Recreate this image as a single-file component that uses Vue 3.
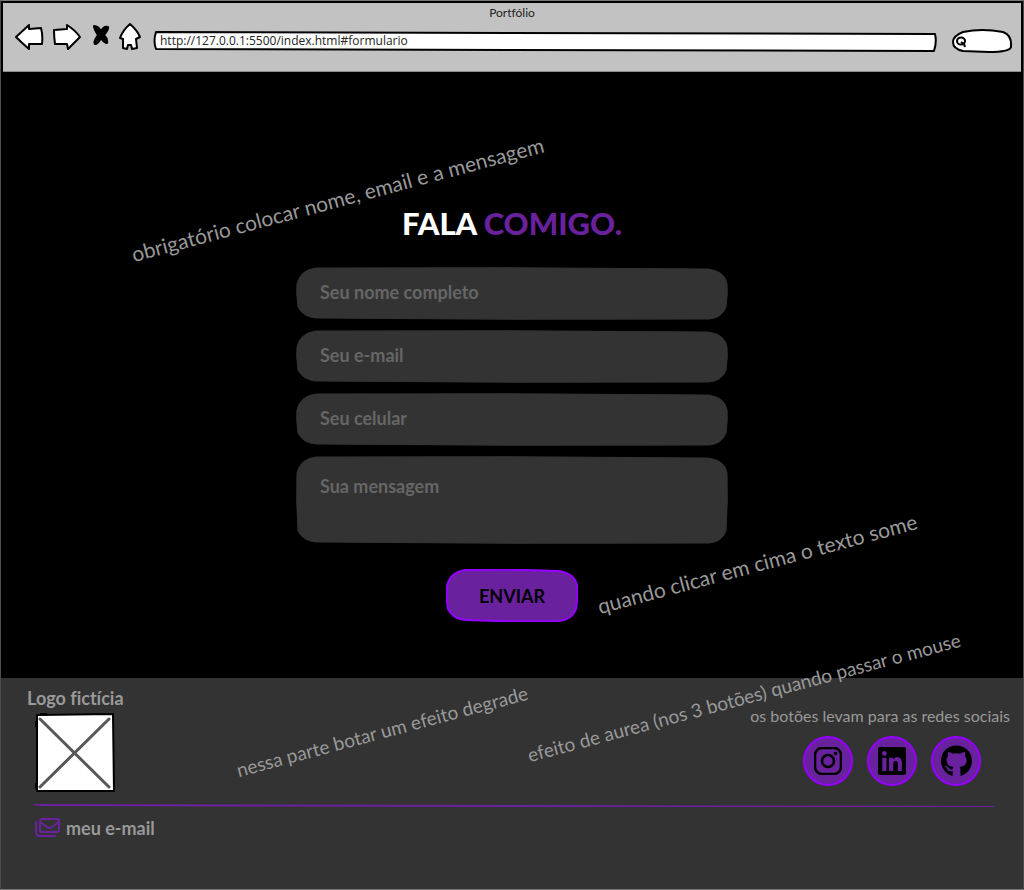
<script setup>
import { ref } from 'vue'

const url = ref('http://127.0.0.1:5500/index.html#formulario')
const search = ref('')

const fields = [
  { id: 'nome', type: 'text', label: 'Seu nome completo', height: 53 },
  { id: 'email', type: 'email', label: 'Seu e-mail', height: 53 },
  { id: 'celular', type: 'tel', label: 'Seu celular', height: 53 },
  { id: 'mensagem', type: 'area', label: 'Sua mensagem', height: 88 }
]
const form = ref({ nome: '', email: '', celular: '', mensagem: '' })

// Hand-drawn rounded box outline for a given size
function sketch(w, h) {
  return `M20 1 Q${w / 2} 0 ${w - 20} 2 Q${w - 3} 4 ${w - 1} 17 Q${w} ${h / 2} ${w - 2} ${h - 13}` +
    ` Q${w - 6} ${h - 2} ${w - 19} ${h - 1} Q${w / 2} ${h} 20 ${h - 2} Q7 ${h - 3} 2 ${h - 13}` +
    ` Q0 ${h / 2} 1 17 Q4 3 20 1 Z`
}
</script>

<template>
  <div class="window">
    <header class="chrome">
      <div class="title">Portfólio</div>
      <div class="toolbar">
        <button class="tool" type="button" aria-label="Voltar">
          <svg width="30" height="28" viewBox="0 0 30 28"><path d="M2 14 L15 2 L15 6 L27 5 Q29 12 28 21 L15 21 L15 26 Q8 20 2 14Z" /></svg>
        </button>
        <button class="tool forward" type="button" aria-label="Avançar">
          <svg width="30" height="28" viewBox="0 0 30 28"><path d="M2 7 L15 6 L15 2 Q23 7 28 14 L16 26 L15 21 L3 21 Q2 14 2 7Z" /></svg>
        </button>
        <button class="tool stop" type="button" aria-label="Parar">
          <svg width="18" height="26" viewBox="0 0 18 26"><path class="solid" d="M2 2 Q7 2 9 8 Q11 2 16 3 Q17 5 12 11 Q16 15 15 19 Q12 19 9 14 Q6 20 3 20 Q1 18 6 11 Q2 5 2 2Z" /></svg>
        </button>
        <button class="tool home" type="button" aria-label="Início">
          <svg width="24" height="30" viewBox="0 0 24 30"><path d="M12 2 Q19 8 22 15 L18 17 L19 26 L14 27 L13 23 L10 23 L9 27 L5 26 L5 17 L2 16 Q5 8 12 2Z" /></svg>
        </button>
        <div class="address">
          <svg class="outline" viewBox="0 0 784 22" preserveAspectRatio="none"><path d="M3 2 L782 4 Q784 12 781 21 L3 19 Q0 11 3 2Z" /></svg>
          <input v-model="url" type="text" aria-label="Endereço" />
        </div>
        <div class="search">
          <svg class="outline" viewBox="0 0 62 26" preserveAspectRatio="none"><path d="M12 4 Q31 0 52 4 Q61 7 60 19 Q59 24 38 24 L12 23 Q2 21 2 14 Q2 8 12 4Z" /></svg>
          <svg class="lens" width="14" height="14" viewBox="0 0 14 14"><ellipse cx="6" cy="6" rx="4" ry="3.6" /><path d="M6 7 L9 9 L10 12" /></svg>
          <input v-model="search" type="text" aria-label="Pesquisar" />
        </div>
      </div>
    </header>

    <main class="content">
      <h1>FALA <span>COMIGO.</span></h1>
      <form @submit.prevent>
        <div v-for="f in fields" :key="f.id" class="field" :class="{ tall: f.type === 'area' }">
          <svg class="shape" :viewBox="`0 0 432 ${f.height}`" preserveAspectRatio="none"><path :d="sketch(432, f.height)" /></svg>
          <textarea v-if="f.type === 'area'" v-model="form[f.id]" :placeholder="f.label" :aria-label="f.label"></textarea>
          <input v-else v-model="form[f.id]" :type="f.type" :placeholder="f.label" :aria-label="f.label" />
        </div>
        <button class="send" type="submit">
          <svg class="shape" viewBox="0 0 132 53" preserveAspectRatio="none"><path :d="sketch(132, 53)" /></svg>
          <span>ENVIAR</span>
        </button>
      </form>
      <p class="note required">obrigatório colocar nome, email e a mensagem</p>
      <p class="note click">quando clicar em cima o texto some</p>
    </main>

    <footer class="footer">
      <div class="top">
        <div class="brand">
          <strong>Logo fictícia</strong>
          <svg width="80" height="80" viewBox="0 0 80 80" role="img" aria-label="Logo fictícia">
            <path d="M2 2 L78 1 L79 78 L2 78Z" fill="#fff" stroke="#000" stroke-width="2" />
            <path d="M5 1 H12 M1 8 V14 M1 70 V76" fill="none" stroke="#000" stroke-width="3" />
            <path d="M5 6 L74 74 M74 6 L5 74" fill="none" stroke="#58585a" stroke-width="3" stroke-linecap="round" />
          </svg>
        </div>
        <div class="social">
          <p>os botões levam para as redes sociais</p>
          <nav>
            <a href="#instagram" aria-label="Instagram">
              <svg width="28" height="28" viewBox="0 0 28 28"><rect x="1" y="1" width="26" height="26" rx="7" fill="none" stroke="#000" stroke-width="2.6" /><circle cx="14" cy="14" r="6" fill="none" stroke="#000" stroke-width="2.6" /><circle cx="21.5" cy="6.5" r="1.8" /></svg>
            </a>
            <a href="#linkedin" aria-label="LinkedIn">
              <svg width="28" height="28" viewBox="0 32 448 448"><path d="M416 32H31.9C14.3 32 0 46.5 0 64.3v383.4C0 465.5 14.3 480 31.9 480H416c17.6 0 32-14.5 32-32.3V64.3c0-17.8-14.4-32.3-32-32.3zM135.4 416H69V202.2h66.5V416zm-33.2-243c-21.3 0-38.5-17.3-38.5-38.5S80.9 96 102.2 96c21.2 0 38.5 17.3 38.5 38.5 0 21.3-17.2 38.5-38.5 38.5zm282.1 243h-66.4V312c0-24.8-.5-56.7-34.5-56.7-34.6 0-39.9 27-39.9 54.9V416h-66.4V202.2h63.7v29.2h.9c8.9-16.8 30.6-34.5 62.2-34.5 66.5 0 78.9 43.8 78.9 100.9V416z" /></svg>
            </a>
            <a href="#github" aria-label="GitHub">
              <svg width="31" height="32" viewBox="0 0 496 512"><path d="M165.9 397.4c0 2-2.3 3.6-5.2 3.6-3.3.3-5.6-1.3-5.6-3.6 0-2 2.3-3.6 5.2-3.6 3-.3 5.6 1.3 5.6 3.6zm-31.1-4.5c-.7 2 1.3 4.3 4.3 4.9 2.6 1 5.6 0 6.2-2s-1.3-4.3-4.3-5.2c-2.6-.7-5.5.3-6.2 2.3zm44.2-1.7c-2.9.7-4.9 2.6-4.6 4.9.3 2 2.9 3.3 5.9 2.6 2.9-.7 4.9-2.6 4.6-4.6-.3-1.9-3-3.2-5.9-2.9zM244.8 8C106.1 8 0 113.3 0 252c0 110.9 69.8 205.8 169.5 239.2 12.8 2.3 17.3-5.6 17.3-12.1 0-6.2-.3-40.4-.3-61.4 0 0-70 15-84.7-29.8 0 0-11.4-29.1-27.8-36.6 0 0-22.9-15.7 1.6-15.4 0 0 24.9 2 38.6 25.8 21.9 38.6 58.6 27.5 72.9 20.9 2.3-16 8.8-27.1 16-33.7-55.9-6.2-112.3-14.3-112.3-110.5 0-27.5 7.6-41.3 23.6-58.9-2.6-6.5-11.1-33.3 2.6-67.9 20.9-6.5 69 27 69 27 20-5.6 41.5-8.5 62.8-8.5s42.8 2.9 62.8 8.5c0 0 48.1-33.6 69-27 13.7 34.7 5.2 61.4 2.6 67.9 16 17.7 25.8 31.5 25.8 58.9 0 96.5-58.9 104.2-114.8 110.5 9.2 7.9 17 22.9 17 46.4 0 33.7-.3 75.4-.3 83.6 0 6.5 4.6 14.4 17.3 12.1C428.2 457.8 496 362.9 496 252 496 113.3 383.5 8 244.8 8z" /></svg>
            </a>
          </nav>
        </div>
      </div>
      <svg class="rule" viewBox="0 0 962 4" preserveAspectRatio="none"><path d="M0 0 L480 1 L962 2 L962 3 L480 3 L5 2Z" /></svg>
      <a class="mail" href="#email">
        <svg width="25" height="20" viewBox="0 0 25 20"><rect x="5" y="1" width="19" height="13" rx="2" /><path d="M5 4 L12 9 Q14 11 17 9 L24 4 M1 4 V14 Q1 18 5 18 H20" /></svg>
        <span>meu e-mail</span>
      </a>
      <p class="note small gradient">nessa parte botar um efeito degrade</p>
      <p class="note small glow">efeito de aurea (nos 3 botões) quando passar o mouse</p>
    </footer>
  </div>
</template>

<style>
body {
  margin: 0;
  background: #000;
}
</style>

<style scoped>
* {
  box-sizing: border-box;
}
.window {
  display: flex;
  flex-direction: column;
  min-height: 100vh;
  overflow: hidden;
  background: #000;
  border: 1px solid #4c4c4c;
  border-top-color: #777;
  border-bottom-color: #777;
  font-family: Lato, "Open Sans", sans-serif;
  font-variant-ligatures: none;
}
p, h1 {
  margin: 0;
}
input, textarea, button {
  font-family: inherit;
}
.chrome {
  height: 73px;
  background: #c2c2c2;
  border: 2px solid #000;
  box-shadow: inset 0 -1px #8c8c8c;
}
.title {
  color: #222;
  font-size: 12px;
  line-height: 20px;
  text-align: center;
}
.toolbar {
  display: flex;
  align-items: center;
  height: 28px;
  padding: 0 8px 0 11px;
}
.tool {
  display: flex;
  padding: 0;
  border: 0;
  background: none;
}
.tool path, .outline path {
  fill: #fff;
  stroke: #000;
  stroke-width: 2;
  stroke-linejoin: round;
}
.tool .solid {
  fill: #000;
  stroke-width: 2;
}
.forward {
  margin-left: 8px;
}
.stop {
  margin-left: 10px;
}
.home {
  margin-left: 8px;
}
.address {
  position: relative;
  flex: 1;
  height: 22px;
  margin: 8px 14px 0 11px;
}
.outline, .shape {
  position: absolute;
  inset: 0;
  width: 100%;
  height: 100%;
}
.address input, .search input {
  position: relative;
  display: block;
  width: 100%;
  height: 100%;
  border: 0;
  outline: 0;
  background: none;
}
.address input {
  padding: 0 7px 2px;
  color: #222;
  font-family: "Open Sans", sans-serif;
  font-size: 12px;
}
.search {
  position: relative;
  width: 62px;
  height: 26px;
  margin-top: 8px;
}
.search input {
  padding: 0 6px 0 20px;
}
.lens {
  position: absolute;
  left: 4px;
  top: 7px;
  fill: none;
  stroke: #000;
  stroke-width: 2;
}
.content {
  position: relative;
  flex: 1;
  display: flex;
  flex-direction: column;
  align-items: center;
  padding: 125px 16px 54px;
}
h1 {
  color: #fff;
  font-size: 31px;
  font-weight: 900;
  line-height: 48px;
}
h1 span {
  color: #6a219d;
}
form {
  display: flex;
  flex-direction: column;
  gap: 10px;
  width: 100%;
  max-width: 432px;
  margin-top: 20px;
}
.field {
  position: relative;
  height: 53px;
}
.field.tall {
  height: 88px;
}
.field path {
  fill: #333;
  stroke: #333;
}
.field input, .field textarea {
  position: relative;
  display: block;
  width: 100%;
  height: 100%;
  padding: 0 24px 4px;
  border: 0;
  outline: 0;
  resize: none;
  background: none;
  color: #999;
  font-size: 18px;
  font-weight: 700;
  line-height: 20px;
}
.field textarea {
  padding-top: 20px;
}
.field ::placeholder {
  color: #666;
  opacity: 1;
}
.send {
  position: relative;
  align-self: center;
  width: 132px;
  height: 53px;
  margin-top: 15px;
  padding: 0;
  border: 0;
  background: none;
  color: #000;
  font-size: 18px;
  font-weight: 700;
}
.send path {
  fill: #6a219d;
  stroke: #9500ff;
  stroke-width: 2;
}
.send span {
  position: relative;
}
.note {
  position: absolute;
  color: #999;
  font-size: 21px;
  line-height: 24px;
  white-space: nowrap;
  transform: rotate(-15deg);
  transform-origin: left bottom;
}
.note.small {
  font-size: 19px;
}
.required {
  left: 134px;
  top: 168px;
}
.click {
  left: 600px;
  top: 520px;
}
.gradient {
  left: 239px;
  top: 80px;
}
.glow {
  left: 530px;
  top: 65px;
}
.footer {
  position: relative;
  height: 211px;
  background: #333;
}
.top {
  display: flex;
  justify-content: space-between;
  padding: 7px 13px 0 26px;
}
.brand {
  display: flex;
  flex-direction: column;
  gap: 2px;
  color: #999;
  font-size: 18px;
  line-height: 26px;
}
.brand svg {
  margin-left: 8px;
}
.social {
  display: flex;
  flex-direction: column;
  align-items: flex-end;
  padding-top: 19px;
}
.social p {
  color: #999;
  font-size: 16px;
  line-height: 24px;
}
nav {
  display: flex;
  gap: 14px;
  margin: 8px 29px 0 0;
}
nav a {
  display: flex;
  align-items: center;
  justify-content: center;
  width: 50px;
  height: 50px;
  border: 2px solid #9500ff;
  border-radius: 50%;
  background: #6a219d;
}
.rule {
  display: block;
  width: calc(100% - 60px);
  height: 4px;
  margin: 11px 29px 0 31px;
  fill: #6a219d;
}
.mail {
  display: inline-flex;
  align-items: center;
  gap: 6px;
  margin: 8px 0 0 34px;
  color: #999;
  font-size: 18px;
  font-weight: 700;
  line-height: 24px;
  text-decoration: none;
}
.mail svg {
  fill: none;
  stroke: #6a219d;
  stroke-width: 2;
  stroke-linecap: round;
}
</style>
